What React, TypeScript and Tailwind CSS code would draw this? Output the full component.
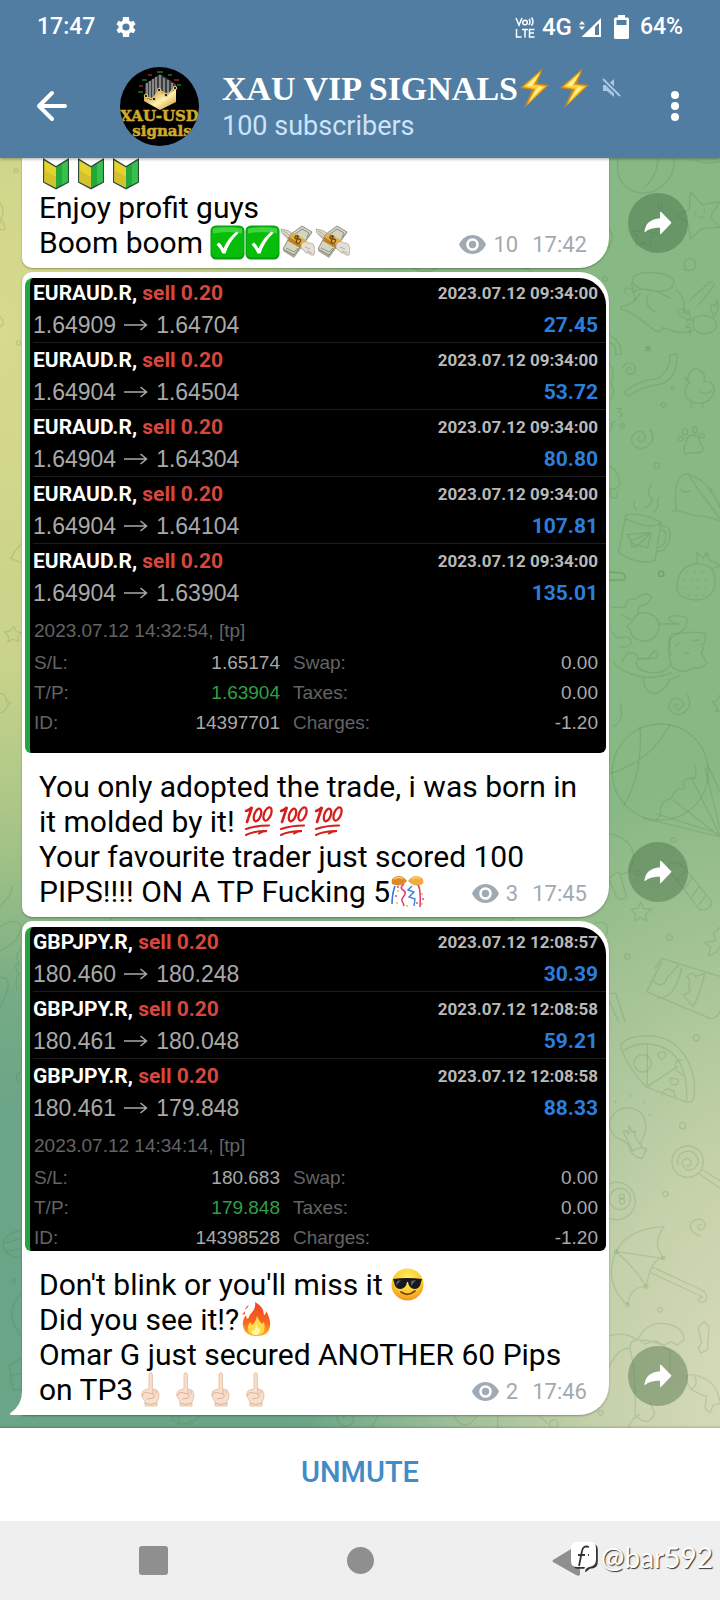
import { Fragment, type ReactNode } from "react";

type EmojiName =
  | "beginner"
  | "check"
  | "money"
  | "hundred"
  | "confetti"
  | "cool"
  | "fire"
  | "finger"
  | "bolt";

const labels: Record<EmojiName, string> = {
  beginner: "beginner symbol",
  check: "check mark",
  money: "money with wings",
  hundred: "hundred points",
  confetti: "confetti ball",
  cool: "smiling face with sunglasses",
  fire: "fire",
  finger: "middle finger",
  bolt: "lightning",
};

const art: Record<EmojiName, ReactNode> = {
  beginner: (
    <>
      <path d="M4 3 17 11 30 3v24.500L17 34.500 4 27.500z" fill="#2d4a3a" />
      <path d="M5.200 5.500 17 12.500v20.300L5.200 26.700z" fill="#e5d22f" />
      <path d="M5.200 15 17 22v10.800L5.200 26.700z" fill="#c9b62c" opacity=".6" />
      <path d="M17 12.500 28.800 5.500v21.200L17 32.800z" fill="#22a83b" />
      <path d="M23 9 28.800 5.500v21.200L23 29.700z" fill="#37c04c" />
    </>
  ),
  check: (
    <>
      <rect x=".5" y=".5" width="34" height="34" rx="5.500" fill="#0a9a14" />
      <rect x="1.500" y="1.500" width="32" height="31" rx="5" fill="#06bd0a" />
      <path d="M3 3.500Q17 1 32 3.500v5Q17 5.500 3 8.500z" fill="#5fe15c" opacity=".65" />
      <path d="M6.500 19.500 9 17.500q3 2.500 4.500 6 4-10 13-17l2 1.500Q19 17 15.500 28.500h-3Q10 23 6.500 19.500z" fill="#fff" />
    </>
  ),
  money: (
    <>
      <path d="M1 4q8 .5 12 5l-1 6q-5 0-7-4Q1 9 1 4z" fill="#dcd6ca" stroke="#a59f92" strokeWidth=".7" />
      <path d="M3 6q5 2 8 6M3 9q4 2 6 4" stroke="#a59f92" strokeWidth=".7" fill="none" />
      <path d="M11 10 22 2l10 6L14 33 3 26z" fill="#a5ab98" />
      <path d="M11 9 22 1l10 6L14 30 3 24z" fill="#d3d5c2" stroke="#777a6c" strokeWidth=".8" />
      <path d="M14 10 22 4l7 4-2 4M6 23l8 4 4-4" fill="none" stroke="#8c927e" />
      <path d="m9 12 5-4 13 8-5 6z" fill="#e3ae3f" />
      <path d="m9 12 13 8v4L8 16z" fill="#bd8125" />
      <path d="M19 12q-3-2-4 0t3 2 2 3-4 0M18 10l-2 8" fill="none" stroke="#694914" strokeWidth="1.300" />
      <path d="M22 18q4-3 7 0 5 0 5 3 2 3 0 9-4 1-5-2-4 1-5-3-5-1-2-7z" fill="#e5e0d6" stroke="#a59f92" strokeWidth=".7" />
      <path d="m25 22 5 2m-3 2 5 2" stroke="#a59f92" strokeWidth=".8" />
    </>
  ),
  hundred: (
    <g fill="none" stroke="#d3201d" strokeLinecap="round">
      <path d="M4 7q4-1 6-4L5 18" strokeWidth="2.600" />
      <ellipse cx="15.500" cy="11" rx="3.200" ry="6.600" strokeWidth="2.300" transform="rotate(20 15.500 11)" />
      <ellipse cx="25.500" cy="10" rx="3.400" ry="7" strokeWidth="2.300" transform="rotate(22 25.500 10)" />
      <path d="M4 25q10-3.500 23-3.500" strokeWidth="2.200" />
      <path d="M4 31q4-2 7-2.500 7-2 14-1.500-4 0-8 2.500" strokeWidth="2" />
    </g>
  ),
  confetti: (
    <>
      <path d="M17 7Q11-1 3 4q-2 2-1 6 9 4 15-3z" fill="#dd8a25" />
      <path d="M18 7q6-8 14-3 2 2 1 6-9 4-15-3z" fill="#f0ad3f" />
      <path d="M4 5q5-3 9 0M22 5q5-3 8 0" stroke="#f7cf72" strokeWidth="1.500" fill="none" />
      <path d="M5 12q-3 8-3 18" stroke="#3678d6" strokeWidth="1.600" fill="none" />
      <path d="M28 11q3 4 2 22M14 10q-5 4-1 6t1 6-2 5 2 5" stroke="#df3e73" strokeWidth="1.600" fill="none" />
      <path d="m22 12-4 4 6 2-5 5 6 2-1 7" stroke="#3d80d8" strokeWidth="1.400" fill="none" />
      <g fill="#f3b93e">
        <circle cx="7" cy="29" r="1" />
        <circle cx="17" cy="32" r="1" />
        <circle cx="32" cy="20" r="1" />
        <circle cx="8" cy="17" r="1" />
        <circle cx="32" cy="30" r="1" />
      </g>
      <g fill="#e5467b">
        <circle cx="8" cy="13" r="1" />
        <circle cx="6" cy="22" r="1" />
        <circle cx="27" cy="29" r="1" />
        <circle cx="33" cy="25" r="1" />
      </g>
    </>
  ),
  cool: (
    <>
      <defs>
        <radialGradient id="face" cx=".5" cy=".3" r=".75">
          <stop offset="0" stopColor="#fff05f" />
          <stop offset=".6" stopColor="#fdc92d" />
          <stop offset="1" stopColor="#e98b16" />
        </radialGradient>
      </defs>
      <circle cx="17.500" cy="17.500" r="16" fill="url(#face)" />
      <path d="M3 12q14-2 29 0l-1 3q-1 7-6 7-6 0-7-7h-1q-1 7-7 7-5 0-6-7z" fill="#18191c" />
      <path d="m7 14 4-1-5 6zm14 0 5-1-5 6z" fill="#5b6068" />
      <path d="M11 25q7 5 14-1" fill="none" stroke="#80400e" strokeWidth="1.700" strokeLinecap="round" />
    </>
  ),
  fire: (
    <>
      <defs>
        <linearGradient id="flame" x1="0" y1="0" x2="0" y2="1">
          <stop offset="0" stopColor="#ee4422" />
          <stop offset=".6" stopColor="#f8671f" />
          <stop offset="1" stopColor="#ffb52a" />
        </linearGradient>
      </defs>
      <path d="M16 0q9 5 9 13 2-1 2-4 5 8 4 15-1 10-13 10Q5 34 4 23q-1-5 3-10 0 3 2 4 1-4 5-8 3-4 2-9z" fill="url(#flame)" />
      <path d="M6 8q1-4 4-5-2 4-4 5zM3 13l3-4v3z" fill="#f3532a" />
      <path d="M18 14q2 5 5 8l2-2q3 13-7 13-10 0-9-8 0-3 2-5l2 3q4-3 5-9z" fill="#ffd94a" />
      <path d="M17 22q1 4 4 5 0 6-4 6-5 0-4-5l2 1q2-3 2-7z" fill="#fff7a4" />
    </>
  ),
  finger: (
    <>
      <path d="M16 3q0-2.300 1.700-2.300T19.400 3v14q6.600 0 6.600 6 0 4-2 7v4H12v-4l-3-6q-1-5 3-6l4-1z" fill="#f8dfcd" stroke="#e2b99d" strokeWidth=".8" />
      <path d="M9 24q2-5 7-3l4 1q3 2 0 4l-6 1M12 31q5 3 12 0M20 17v5m3-4v4" fill="none" stroke="#deb194" strokeWidth="1" />
    </>
  ),
  bolt: (
    <>
      <path d="M25 0 2 20l12 2-8 18 25-23-12-1.500z" fill="#c98a24" />
      <path d="M23 3 5 19l12 2-8 16 19-19-12-1.500z" fill="#fcc928" />
      <path d="M22 5 8 18l12 1-9 14 14-14-11-1z" fill="#fff193" />
    </>
  ),
};

function Emoji({ name }: { name: EmojiName }) {
  return (
    <svg role="img" aria-label={labels[name]} viewBox="0 0 35 35" className="size-[35px] shrink-0">
      {art[name]}
    </svg>
  );
}

function Emojis({ name, count }: { name: EmojiName; count: number }) {
  return (
    <>
      {Array.from({ length: count }, (_, i) => (
        <Emoji key={i} name={name} />
      ))}
    </>
  );
}

function Line({ children }: { children: ReactNode }) {
  return <p className="flex h-[35px] items-center whitespace-pre">{children}</p>;
}

function Meta({ views, time }: { views: string; time: string }) {
  return (
    <span className="ml-auto flex items-center pt-1 pr-[5px] text-[22px] leading-[27px] text-[#a1aab3]">
      <svg viewBox="0 0 27 19" className="mr-[7px] h-[19px] w-[27px]" aria-label="Views" role="img">
        <path
          fill="#a1aab3"
          fillRule="evenodd"
          d="M13.500 0C7.500 0 2.400 3.900 0 9.500 2.400 15.100 7.500 19 13.500 19S24.600 15.100 27 9.500C24.600 3.900 19.500 0 13.500 0Zm0 15.800a6.300 6.300 0 1 1 0-12.600 6.300 6.300 0 0 1 0 12.600Z"
        />
        <circle cx="13.500" cy="9.500" r="3.700" fill="#a1aab3" />
      </svg>
      <span>{views}</span>
      <time className="ml-[14px]">{time}</time>
    </span>
  );
}

function ShareButton() {
  return (
    <button aria-label="Share" className="flex size-[60px] shrink-0 items-center justify-center rounded-full bg-[#3c643c66]">
      <svg viewBox="0 0 28 24" className="h-[24px] w-[28px]" fill="#fff">
        <path d="M16 1.500Q16 .2 17.200 1L27 11q.8.800 0 1.600l-9.800 10.200q-1.200.9-1.200-.6v-5.400C9 16.700 4.300 18.300 1.500 20.800Q.3 21.500.5 20 2 8.500 16 7.200z" />
      </svg>
    </button>
  );
}

type Trade = { from: string; to: string; at: string; profit: string };
type Report = {
  symbol: string;
  trades: Trade[];
  closed: string;
  sl: string;
  tp: string;
  id: string;
};

function TradeReport({ report, roomy }: { report: Report; roomy?: boolean }) {
  const details = [
    ["S/L:", report.sl, "Swap:", "0.00"],
    ["T/P:", report.tp, "Taxes:", "0.00"],
    ["ID:", report.id, "Charges:", "-1.20"],
  ];
  return (
    <div
      className={`overflow-hidden rounded-tl-lg rounded-tr-[27px] rounded-b-md border-l-[5px] border-[#25a540] bg-black pr-2 pl-[3px] font-['Liberation_Sans',sans-serif] ${roomy ? "pb-[17px]" : ""}`}
    >
      <ul>
        {report.trades.map((t, i) => (
          <li
            key={i}
            className={`-mr-2 border-[#1c1c1c] pr-2 ${i < report.trades.length - 1 ? "border-b" : ""} ${i > 0 ? "pt-[2px]" : ""}`}
          >
            <div className="flex h-[30px] items-center justify-between font-[Roboto,sans-serif] font-bold">
              <span className="text-[21px] text-white">
                {report.symbol}, <span className="text-[#d8473f]">sell 0.20</span>
              </span>
              <span className="text-[17px] text-[#b9b9b9]">{t.at}</span>
            </div>
            <div className="flex h-[34px] items-center justify-between text-[23px] text-[#a9a9a9]">
              <span className="flex items-center">
                {t.from}
                <svg viewBox="0 0 24 12" className="mx-2 h-3 w-6" fill="none" stroke="#a9a9a9" strokeWidth="1.500" aria-label="to" role="img">
                  <path d="M0 6h22M16.500 1 22.500 6l-6 5" />
                </svg>
                {t.to}
              </span>
              <span className="font-[Roboto,sans-serif] text-[21px] font-bold text-[#2b7fdc]">{t.profit}</span>
            </div>
          </li>
        ))}
      </ul>
      <p className="flex h-[38px] items-center pt-[2px] pl-[1px] text-[19px] text-[#646464]">{report.closed}, [tp]</p>
      <dl className="-mb-[2px] grid grid-cols-[1fr_1fr_1fr_1fr] pl-[1px] text-[19px] leading-[30px] text-[#a9a9a9]">
        {details.map(([k1, v1, k2, v2], i) => (
          <Fragment key={k1}>
            <dt className="text-[#646464]">{k1}</dt>
            <dd className={`pr-[36px] text-right ${i === 1 ? "text-[#2fa045]" : ""}`}>{v1}</dd>
            <dt className="-ml-[23px] text-[#646464]">{k2}</dt>
            <dd className="text-right">{v2}</dd>
          </Fragment>
        ))}
      </dl>
    </div>
  );
}

const eurTimes = "2023.07.12 09:34:00";
const eur: Report = {
  symbol: "EURAUD.R",
  trades: [
    { from: "1.64909", to: "1.64704", at: eurTimes, profit: "27.45" },
    { from: "1.64904", to: "1.64504", at: eurTimes, profit: "53.72" },
    { from: "1.64904", to: "1.64304", at: eurTimes, profit: "80.80" },
    { from: "1.64904", to: "1.64104", at: eurTimes, profit: "107.81" },
    { from: "1.64904", to: "1.63904", at: eurTimes, profit: "135.01" },
  ],
  closed: "2023.07.12 14:32:54",
  sl: "1.65174",
  tp: "1.63904",
  id: "14397701",
};
const gbp: Report = {
  symbol: "GBPJPY.R",
  trades: [
    { from: "180.460", to: "180.248", at: "2023.07.12 12:08:57", profit: "30.39" },
    { from: "180.461", to: "180.048", at: "2023.07.12 12:08:58", profit: "59.21" },
    { from: "180.461", to: "179.848", at: "2023.07.12 12:08:58", profit: "88.33" },
  ],
  closed: "2023.07.12 14:34:14",
  sl: "180.683",
  tp: "179.848",
  id: "14398528",
};

function Doodles() {
  return (
    <svg
      aria-hidden="true"
      viewBox="0 158 720 1270"
      className="absolute top-0 left-0 h-[1270px] w-[720px]"
      fill="none"
      stroke="#2f6b2f"
      strokeOpacity=".15"
      strokeWidth="4"
      strokeLinecap="round"
      strokeLinejoin="round"
    >
      <g transform="translate(400 150) scale(.3333)">
        <path d="M655 20q-12 70 30 95 60 35 110-15 35-35 25-80M775 20q-3 60-40 90M885 30q30 15 75 5" />
        <path d="m872 126 35 38 52-10-28 48 28 30-55 4-32 30-8-48-32-20 36-20zM885 185v8m28-14v8m-18 12q8 10 16 0" />
        <path d="m735 225 8 20 26 4-20 18 4 24-20-12-26 8 6-24-14-20 26 2z" />
        <circle cx="780" cy="168" r="7" />
        <circle cx="615" cy="386" r="7" />
        <circle cx="744" cy="596" r="6" />
        <path d="M860 360q-18-30 10-35 22 5 16 25-10 18-34 8M625 235q25 25 0 60M40 355q35 20 70 0m225 0q35-10 60 10" />
        <path d="M760 368q60 5 62 30-5 30-60 25-65-5-65-35 5-22 63-20zM695 400l12 52M697 425q35-15 75 0M707 425q-40-25-30 5M772 425l40 20" />
        <path d="M720 430q-20 35-55 40-10 8 15 12 45 25 85 60 20 8 24-10 50 25 90 10M745 435q-15 30 20 50M830 420q30 25 20 70M870 450l60-55q20 0 10 16l-45 54" />
        <path d="M880 505q30-20 65 5 15 25-15 38-30 10-50-14zM880 510q-28 0-45-20-8-20 20-10l5 15q5-28 10 5 0 10-10 15M940 500q25-30 10-50l-5 20q-15-20-12 10l10 20M870 520l-14 14 14-4v24" />
      </g>
      <g transform="translate(600 300) scale(.3333)">
        <path d="M27 105q35 15 38 56l-18 3q3-32-20-38M67 205q10-22 32-13 15 15 0 30-22 5-20-12 8-15 15-2M210 165l20-3q5 65-40 88-70 10-106 40l-12-14q45-35 100-40 40-25 38-71z" />
        <circle cx="144" cy="146" r="5" />
        <circle cx="218" cy="264" r="5" />
        <circle cx="191" cy="314" r="7" />
        <circle cx="67" cy="377" r="6" />
        <circle cx="170" cy="497" r="8" />
        <circle cx="183" cy="821" r="8" />
        <path d="M264 240q0-34 27-33 30 10 20 38 30-5 32 25-8 40-48 40-40-4-40-38 2-18 17-25-12-2-17-13zM273 310v12m32-12 4 12M300 275q20 12 35-2M28 190q20 25 5 60 15 25 0 50M50 325h15l-10 10q20 5 5 15M46 365q-20 5-8 12-8 15-10 16" />
        <path d="M150 390q20 25-5 48-30 18-48-8-8-25 15-35 20-5 24 15-5 18-15 15-15-5-3-15M275 405q25 0 25 25 15 15 5 25-8 5-30 3-25 12-22-10-2-10 5-15 0-23 17-28z" />
        <ellipse cx="242" cy="416" rx="8" ry="6" />
        <ellipse cx="255" cy="395" rx="8" ry="9" />
        <ellipse cx="285" cy="389" rx="7" ry="10" />
        <ellipse cx="305" cy="407" rx="8" ry="6" />
        <path d="M28 498q35 20 30 60-18 15-30 5m6 10q-10 25 15 20l5-22M228 630q-10-110 35-108 65 20 97 100M218 632q18-2 60 14 35 0 82 16M263 522q40 60 97 134M243 568q10 15 26 4m60 6 6-10" />
        <path d="M78 645q45-10 105 22l-18 115q-50 15-110-24zM78 645q-8 12 20 20 60 25 87 2M182 680q35-10 26 42-12 38-36 30M185 690q18 0 10 36-10 18-20 16M80 704l73-6-10 46-35-10-12 8-4-20zM153 698l-60 24 14 20 46-44M110 630q-15-12-5-25M135 625q35-22 10-40 0-22 10-30M160 636q18-10 12-30 0-10 6-12" />
        <path d="M28 818h40q12 12 0 22H28M292 788l-2-30 20 16 10-16 10 25q20 5 30 15l-22 8" />
      </g>
      <g transform="translate(400 560) scale(.3333)">
        <path d="M832 90q-5-65 50-78 60-5 64 50 0 55-60 58-50-5-54-30z" />
        <path strokeDasharray="3 20" d="M860 35h65M848 60h85M846 82h85M865 105h55" />
        <path d="M627 35q15-2 22 4 35-2 26 22h-46M636 142h40q0-28 30-24 30-25 48-10-5 25-28 28-15 5-10 25M664 165l35 16q12-30 50-20 30 12 28 42-8 40-46 40-40-5-40-35l-12-8 20-19M778 192h60q-35-5-30-20 20-10 50 0 12 35-30 50-30-10-15 65" />
        <path d="M635 215q15 20 25 18 40-10 32 20-15 15-35 5M813 235q20-25 105-15l-5 30-10 5 8 10-8 13 18 30q-10 20-45 17-30 20-60-5-20-50-3-85zM665 305l20-28q30 0 28 20h30l20-25q20 10 5 20l-20 5q-50-10-35 25 20 20 60 15 28 0 40-28M640 305q20 35 100 48 60-5 75-15M730 350q0 50 40 50 30-15 38-40l30-12M825 258l15-10m40-5 16-3m-42 40h14" />
        <path d="M862 405q20 35-15 56-35 8-40-20 2-30 30-25 20 10 10 25-15 15-25 0 0-15 12-5M660 430q15 50-20 70M935 425l15-2 10-18M937 426l15 15-5 15 13-5" />
        <circle cx="781" cy="636" r="144" />
        <path d="M720 500q10 140-50 240M810 495q-60 110-180 145M885 615q5 30 0 40-45-5-30 30-35 0-40 30-42 10-32 50l-15 15M923 615l37 80M915 622l45 185M875 655l85 170M820 720l140 110M770 762l190 60M730 775l230 55" />
        <path d="M627 820q80 20 73 80-10 50-40 40-10-8-33 15M660 940l20 72q-15 12-30 0l-23-55M805 915q20-20 50 10l80 100q0 25-35 25l-70-90q-25-25-25-45zM855 935l-30 30m50-8-22 30m44-8-22 33m44-8-22 30M722 1025l8 20 24 2-18 18 5 18-20-10-18 10 4-20-13-16 20-2zM960 1102l-20 20 8 20-35 5 20 15-8 24q20 0 35-25" />
        <circle cx="784" cy="42" r="8" />
        <circle cx="820" cy="840" r="7" />
        <circle cx="714" cy="940" r="7" />
        <circle cx="808" cy="1132" r="9" />
        <circle cx="682" cy="1190" r="8" />
        <path d="M585 1090q35-10 37 15 0 20-10 35M340 1075q-10 10-20 12" />
      </g>
      <g transform="translate(400 960) scale(.3333)">
        <path d="m765 25 20-30 175 54M740 95l45-90M740 95l190 80q15 5 30-20M755 60q35 30 45-5l40-45M775 115q50 0 70-90M860 50q20-20 25 0l30-10q-15 60-35 100-20-20-30-35 30-10 15-20 10-30-5-35zM627 100h20l28 85m-48-63 30 65" />
        <path d="M662 265q0-35 80-38c100 0 150 95 140 185q-5 20-25 14l-118-45q-50-50-77-116zM670 272q40-25 75-20 120 10 115 170M742 250v130l90-60M785 405q10-30 38-10l2 20M845 300q-25 0-17 30l20 15M775 280q30-10 20 10-15 20-22-10zM810 355q40-2 18 20-20 0-18-20z" />
        <circle cx="728" cy="310" r="26" />
        <circle cx="889" cy="234" r="9" />
        <circle cx="848" cy="497" r="9" />
        <circle cx="796" cy="702" r="8" />
        <path d="M694 577q-6-28-35-40c-45-20-40-85 20-94 60 0 70 60 46 98-8 15 5 25 15 33M694 577q20-18 46-12l-13 30q-20 0-33-18zM698 572l-28-55 8-5 8 10 2-25 8 20 10-5-2 15 22 35" />
        <path d="M690 403l3 8m42 12-6 7m17 36 8-2m-110-42 4 6" />
        <circle cx="863" cy="605" r="47" />
        <path d="M833 615q-5-40 35-42 30 10 26 38-15 25-35 18-22-20-5-32 20-5 20 15-8 10-14 5M908 630l52 32m-62-20 62 42" />
        <circle cx="650" cy="723" r="56" />
        <circle cx="660" cy="717" r="32" />
        <circle cx="666" cy="709" r="7" />
        <circle cx="666" cy="724" r="8" />
        <path d="M900 828q-40-15-24-42 25-20 40 5 0 20-18 18-12-15 5-15" />
      </g>
      <g transform="translate(400 1240) scale(.3333)">
        <path d="M648 35q35-70 145-75-40 50-2 95-40 0-52 85-50 0-56 55-75-70-35-160zM648 35l143 20M648 35q60 50 90 105M755 80l150 70q25 15 10 35-18 5-22-8l15-6-160-75" />
        <circle cx="648" cy="35" r="5" />
        <circle cx="791" cy="54" r="5" />
        <circle cx="739" cy="140" r="5" />
        <circle cx="683" cy="195" r="5" />
        <circle cx="780" cy="209" r="7" />
        <circle cx="602" cy="518" r="7" />
        <circle cx="461" cy="552" r="13" />
        <path d="M627 288q45-15 85 12 30-60 90-48 50 10 50 48l-20 15-20-10-20 12-25-15-30 10-20-12q60 0 94 35l-3 75M710 300q-20 0-20 25-50-5-83 115M690 325q20 80 15 200 40 40 60-5l-15-30M895 262l18-18 15 18-5 45v22l-20 10-8-15 10-15zM862 405q20-5 60 15 35 25 38 70l-20 5-10 24-15-15 5-35q-70-20-58-64zM885 410q12 25-14 40M160 525q35 60 73 0m60 0v38M415 525l25 25M685 563q15-35 35-40" />
      </g>
      <g transform="translate(0 1240) scale(.3333)">
        <path d="M62-30Q5-15 10 20q15 35 52 32M14 10l48-15M18 35l44-10M60 165q-50 50 0 120M62 355l-35 20 12 75 23-2M62 400l-28 5M90 520l8 12M515 525q10 55 90 0M540 525q-20 35 40 25M1010 525q0 30 30 35 25-10 20-30-20-20-30 5M1115 563l20-38" />
        <circle cx="40" cy="122" r="6" />
      </g>
      <g transform="translate(0 900) scale(.3333)">
        <path d="M0 20q40-40 35-60M0 80q40-25 60-8 10 50-60 80M0 232q50 0 0 90M62 150q-20 15-5 40-20 10 0 30-15 15-5 50M60 515q-20 15-5 30M340 50l-10 10m260-10 20 10" />
      </g>
      <g transform="translate(0 540) scale(.3333)">
        <path d="M65 10Q45 30 32 55l30 12M42 260l7 15 15 3-12 12 4 15-18-8-14 10 2-17-12-14 15-3zM0 460q18 0 20 25l12 3-10 8q-5 20-22 22" />
      </g>
      <g transform="translate(0 150) scale(.3333)">
        <circle cx="48" cy="62" r="6" />
        <circle cx="56" cy="579" r="6" />
        <path d="M0 160q15 15 5 45l-5 15m0 20 15-2Q15 220 0 205M0 500q20 20 0 30" />
      </g>
    </svg>
  );
}

function Avatar() {
  return (
    <svg viewBox="0 0 79 79" className="size-[79px] shrink-0" role="img" aria-label="XAU-USD signals">
      <defs>
        <clipPath id="round">
          <circle cx="39.500" cy="39.500" r="39.500" />
        </clipPath>
        <linearGradient id="gold" x1="0" x2="1" y1="0" y2="1">
          <stop offset="0" stopColor="#b67a18" />
          <stop offset=".55" stopColor="#fff2b0" />
          <stop offset="1" stopColor="#c88b19" />
        </linearGradient>
      </defs>
      <g clipPath="url(#round)">
        <rect width="79" height="79" fill="#000" />
        <path d="m40 7 16 10v14H25V17z" fill="#3c3c3e" />
        <path d="M27 16v15m3-17v17m3-19v19m3-21v21m4-23v23m4-20v20m4-18v18m4-15v15" stroke="#a6a6aa" strokeWidth="1.400" />
        <path d="m24 30 8 3 6-10 8 6 10-7v13L40 43 24 34z" fill="url(#gold)" />
        <path d="m26 30 7 2 6-9 8 5 8-7" stroke="#eac369" strokeWidth="1.500" fill="none" />
        <g fill="#2b220c" stroke="#f1d48a">
          <circle cx="26" cy="29" r="1.800" />
          <circle cx="34" cy="32" r="1.800" />
          <circle cx="39" cy="23" r="1.800" />
          <circle cx="46" cy="28" r="1.800" />
          <circle cx="55" cy="21" r="1.800" />
        </g>
        <path d="M37 5h6M22 13h5M18 25h5M48 8h4M57 18h4" stroke="#1d7332" strokeWidth="1.500" />
        <path d="M28 8h4M19 19h4M54 13h5" stroke="#9c2227" strokeWidth="1.500" />
        <g
          fill="#d0a92c"
          stroke="#d0a92c"
          strokeWidth=".5"
          textAnchor="middle"
          className="font-['DejaVu_Serif','Liberation_Serif',serif] text-[15px] font-bold"
        >
          <text x="39.500" y="54">XAU-USD</text>
          <text x="42" y="69">signals</text>
        </g>
      </g>
    </svg>
  );
}

export default function App() {
  return (
    <div className="flex min-h-screen flex-col font-[Roboto,sans-serif]">
      <header className="relative z-10 bg-[#517da2] text-white shadow-[0_1px_3px_rgba(0,0,0,0.35)]">
        <div className="flex h-[54px] items-center pr-[37px] pl-[37px] text-[23px] font-medium">
          <time>17:47</time>
          <svg viewBox="2 2 20 20" className="ml-[21px] size-[20px]" fill="#fff" aria-label="Settings" role="img">
            <path
              fillRule="evenodd"
              d="M19.400 13a7.500 7.500 0 0 0 0-2l2.100-1.700-2-3.500-2.500 1a7.500 7.500 0 0 0-1.700-1L15 2H9l-.4 3.800a7.500 7.500 0 0 0-1.700 1l-2.400-1-2 3.500L4.600 11a7.500 7.500 0 0 0 0 2l-2.100 1.700 2 3.500 2.400-1a7.500 7.500 0 0 0 1.700 1L9 22h6l.4-3.800a7.500 7.500 0 0 0 1.700-1l2.400 1 2-3.500zM12 15.600a3.600 3.600 0 1 1 0-7.200 3.600 3.600 0 0 1 0 7.200z"
            />
          </svg>
          <div className="ml-auto flex items-center">
            <svg viewBox="0 0 20 22" className="mr-[7px] h-[22px] w-[20px]" fill="none" stroke="#fff" role="img" aria-label="VoLTE">
              <path strokeWidth="1.500" d="m1 2 3 7 3-7M1.500 13v8h5M7 13.500h6M10 13v8.500M19.500 13.500h-5v7.500h5M14.500 17h4.500M14 3q2 2.500 0 6M16.500 1.500q3 4 0 8" />
              <circle cx="10" cy="6.500" r="2.300" strokeWidth="1.500" />
            </svg>
            <span className="text-[24px]">4G</span>
            <svg viewBox="0 0 22 19" className="ml-[7px] h-[19px] w-[22px]" role="img" aria-label="Signal">
              <path fill="#fff" d="M0 6.500 3 3l3 3.500zM0 8.500h6L3 12zM22 0v19H2.500zm-2 5-4 4v8h4z" fillRule="evenodd" />
            </svg>
            <svg viewBox="0 0 15 24" className="ml-[13px] h-[24px] w-[15px]" role="img" aria-label="Battery">
              <path fill="#fff" fillRule="evenodd" d="M4 0h7v2.500h2.500Q15 2.500 15 4v18.500q0 1.500-1.500 1.500h-12Q0 24 0 22.500V4q0-1.500 1.500-1.500H4zM2.500 5v5h10V5z" />
            </svg>
            <span className="ml-[11px]">64%</span>
          </div>
        </div>
        <div className="flex h-[104px] items-center pr-[41px] pl-[36px]">
          <button aria-label="Back" className="mr-[52px]">
            <svg viewBox="0 0 32 32" className="size-[32px]" fill="none" stroke="#fff" strokeWidth="4" strokeLinecap="round" strokeLinejoin="round">
              <path d="M16 3 3 16l13 13M4 16h25" />
            </svg>
          </button>
          <Avatar />
          <div className="ml-[23px] flex min-w-0 flex-1 flex-col pt-[2px]">
            <h1 className="flex h-[38px] items-center font-['Liberation_Serif',serif] text-[34px] font-bold whitespace-nowrap">
              XAU VIP SIGNALS
              <span className="flex gap-[7px]">
                {[0, 1].map((i) => (
                  <svg key={i} viewBox="0 0 33 40" className="h-[40px] w-[33px]" role="img" aria-label={labels.bolt}>
                    {art.bolt}
                  </svg>
                ))}
              </span>
              <svg viewBox="0 0 19 21" className="ml-[11px] h-[21px] w-[19px]" role="img" aria-label="Muted">
                <path d="M1 7h4l7-6v18l-7-6H1z" fill="#a9c6e2" />
                <path d="m1 1 17 17" stroke="#517da2" strokeWidth="5" />
                <path d="m1 1 17 17" stroke="#a9c6e2" strokeWidth="2" />
              </svg>
            </h1>
            <p className="text-[27px] leading-[38px] text-[#cbe3fb]">100 subscribers</p>
          </div>
          <button aria-label="More options" className="flex flex-col gap-[3px]">
            <span className="size-2 rounded-full bg-white" />
            <span className="size-2 rounded-full bg-white" />
            <span className="size-2 rounded-full bg-white" />
          </button>
        </div>
      </header>

      <main className="relative flex flex-col gap-1 overflow-hidden bg-[#88b884] bg-[radial-gradient(ellipse_65%_50%_at_108%_98%,#dbddbb_0%,#d0d6b0d9_40%,#d0d6b000_100%),radial-gradient(ellipse_55%_52%_at_0%_14%,#d8da8c_0%,#d3d78bd9_50%,#d3d78b00_100%),radial-gradient(ellipse_110%_42%_at_0%_92%,#6ba587_0%,#6ba587_40%,#6ba58700_100%)] pb-[13px] text-[30px] leading-[35px] text-black">
        <Doodles />
        <article className="relative -mt-[3px] flex items-end gap-[19px] pr-8 pl-[22px]">
          <div className="min-w-0 flex-1 rounded-br-[30px] rounded-bl-[10px] bg-white px-[17px] pb-2 shadow-[0_1px_2px_rgba(0,0,0,0.3)]">
            <Line>
              <Emojis name="beginner" count={3} />
            </Line>
            <Line>Enjoy profit guys</Line>
            <Line>
              {"Boom boom "}
              <Emojis name="check" count={2} />
              <Emojis name="money" count={2} />
              <Meta views="10" time="17:42" />
            </Line>
          </div>
          <div className="pb-[15px]">
            <ShareButton />
          </div>
        </article>

        <article className="relative flex items-end gap-[19px] pr-8 pl-[22px]">
          <div className="min-w-0 flex-1 rounded-[10px] rounded-r-[30px] bg-white px-[3px] pt-[6px] pb-2 shadow-[0_1px_2px_rgba(0,0,0,0.3)]">
            <TradeReport report={eur} roomy />
            <div className="px-[14px] pt-4">
              <Line>You only adopted the trade, i was born in</Line>
              <Line>
                {"it molded by it! "}
                <Emojis name="hundred" count={3} />
              </Line>
              <Line>Your favourite trader just scored 100</Line>
              <Line>
                PIPS!!!! ON A TP Fucking 5<Emoji name="confetti" />
                <Meta views="3" time="17:45" />
              </Line>
            </div>
          </div>
          <div className="pb-[15px]">
            <ShareButton />
          </div>
        </article>

        <article className="relative flex items-end gap-[19px] pr-8 pl-[22px]">
          <svg viewBox="0 0 14 24" className="absolute bottom-0 left-[9px] h-6 w-[14px]" fill="#fff" aria-hidden="true">
            <path d="M14 0v24H2q-2-.5-.5-2Q13 14 13 0z" />
          </svg>
          <div className="min-w-0 flex-1 rounded-[30px] rounded-tl-[10px] rounded-bl-none bg-white px-[3px] pt-[6px] pb-2 shadow-[0_1px_2px_rgba(0,0,0,0.3)]">
            <TradeReport report={gbp} />
            <div className="px-[14px] pt-4">
              <Line>
                {"Don't blink or you'll miss it "}
                <Emoji name="cool" />
              </Line>
              <Line>
                Did you see it!?
                <Emoji name="fire" />
              </Line>
              <Line>Omar G just secured ANOTHER 60 Pips</Line>
              <Line>
                on TP3
                <Emojis name="finger" count={4} />
                <Meta views="2" time="17:46" />
              </Line>
            </div>
          </div>
          <div className="pb-[9px]">
            <ShareButton />
          </div>
        </article>
      </main>

      <button className="relative h-[93px] bg-white pb-1 text-[29px] font-medium text-[#3f8cc7] shadow-[0_-1px_2px_rgba(0,0,0,0.2)]">
        UNMUTE
      </button>

      <nav className="relative flex min-h-[79px] flex-1 items-center justify-between bg-[#efefef] pr-[139px] pl-[139px]">
        <button aria-label="Recent apps" className="size-[29px] rounded-[3px] bg-[#8f8f8f]" />
        <button aria-label="Home" className="size-[27px] rounded-full bg-[#8f8f8f]" />
        <button aria-label="Back">
          <svg viewBox="0 0 29 32" className="h-8 w-[29px]" fill="#8f8f8f">
            <path d="M1 15 24 1q4-2 4 2v26q0 3-4 1L1 17q-1-1 0-2z" />
          </svg>
        </button>
        <div className="absolute right-[7px] bottom-[26px] flex items-center">
          <svg viewBox="0 0 27 30" className="mr-[3px] h-[30px] w-[27px]" aria-hidden="true">
            <path d="M6 1h14q6 0 6 6v12q0 7-8 7l-5 4 1-4H6q-5 0-5-6V7q0-6 5-6z" fill="#333" transform="translate(.8 .8)" />
            <path d="M6 0h13q6 0 6 6v12q0 6-7 7l-5 3 1-3H6q-6 0-6-6V6q0-6 6-6z" fill="#fff" />
            <path d="M18 5q-6-2-7 4L8 24M7 13h7m3 0h1" fill="none" stroke="#333" strokeWidth="1.800" />
          </svg>
          <span className="font-[Lato,sans-serif] text-[28px] leading-[34px] text-white [text-shadow:1px_1px_1px_#333]">@bar592</span>
        </div>
      </nav>
    </div>
  );
}
